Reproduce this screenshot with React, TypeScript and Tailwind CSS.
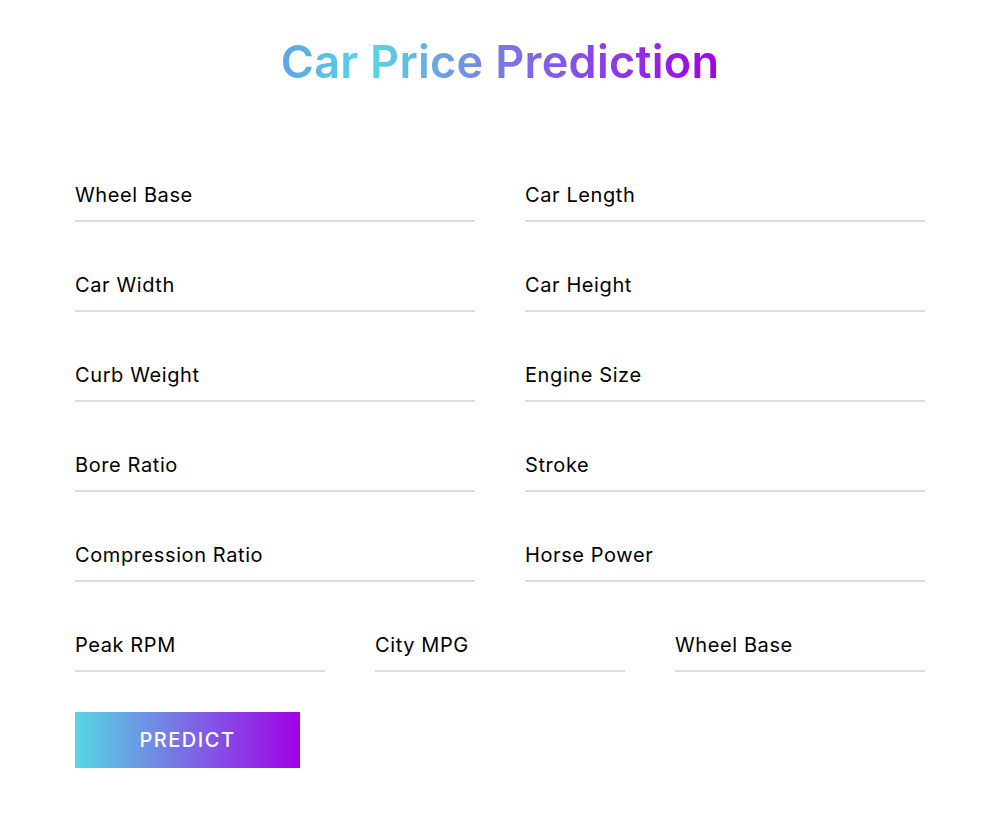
import React from 'react';

const rows: string[][] = [
  ['Wheel Base', 'Car Length'],
  ['Car Width', 'Car Height'],
  ['Curb Weight', 'Engine Size'],
  ['Bore Ratio', 'Stroke'],
  ['Compression Ratio', 'Horse Power'],
];

const lastRow = ['Peak RPM', 'City MPG', 'Wheel Base'];

function Field({ label }: { label: string }) {
  return (
    <input
      type="text"
      placeholder={label}
      className="block w-full h-[52px] border-b-2 border-[#dddddd] bg-transparent text-[20px] tracking-[0.6px] text-black placeholder:text-black outline-none"
    />
  );
}

export default function App() {
  return (
    <div
      className="min-h-screen bg-white"
      style={{ fontFamily: "Inter, 'Open Sans', sans-serif" }}
    >
      <div className="mx-auto w-[850px] pt-[32px]">
        <h1 className="text-center text-[45px] leading-[60px] font-semibold tracking-[0.3px] mb-[78px]">
          <span className="bg-[linear-gradient(90deg,#5fa3e4_0%,#56d9e4_20%,#7a78e6_50%,#a000e8_100%)] bg-clip-text text-transparent">
            Car Price Prediction
          </span>
        </h1>

        <form className="flex flex-col gap-[38px]">
          {rows.map((r, i) => (
            <div key={i} className="grid grid-cols-2 gap-x-[50px]">
              {r.map((label) => (
                <Field key={label} label={label} />
              ))}
            </div>
          ))}
          <div className="grid grid-cols-3 gap-x-[50px]">
            {lastRow.map((label, i) => (
              <Field key={i} label={label} />
            ))}
          </div>
          <button
            type="button"
            className="w-[225px] h-[56px] mt-[2px] bg-[linear-gradient(90deg,#56d7e2,#a000e8)] text-white text-[20px] font-medium tracking-[1.5px] uppercase"
          >
            Predict
          </button>
        </form>
      </div>
    </div>
  );
}
